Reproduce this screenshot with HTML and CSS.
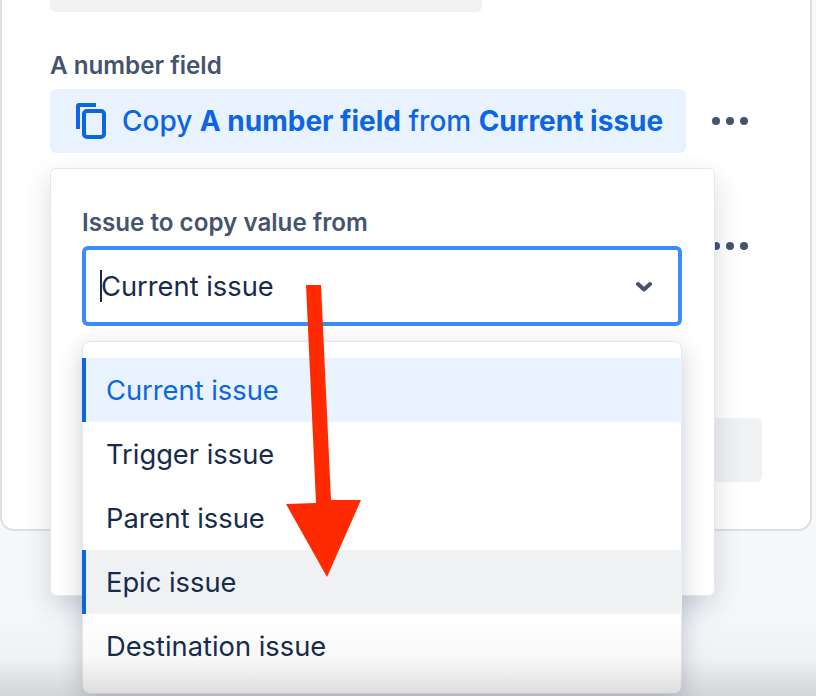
FILE: index.html
```html
<!DOCTYPE html>
<html lang="en">

<head>
    <meta charset="UTF-8">
    <title>Copy field value</title>
    <link rel="stylesheet" href="styles.css">
</head>

<body>
    <main class="card">
        <div class="card-top"></div>

        <div class="field-label">A number field</div>
        <div class="action-row">
            <div class="action">
                <svg class="copy-icon" width="32" height="36" viewBox="0 0 32 36" fill="none">
                    <path d="M2 26V3a1 1 0 0 1 1-1h17" stroke="#0c66e4" stroke-width="4" />
                    <rect x="8" y="8" width="20" height="26" rx="3" stroke="#0c66e4" stroke-width="4" />
                </svg>
                <span>Copy <b>A number field</b> from <b>Current issue</b></span>
            </div>
            <div class="dots"><i></i><i></i><i></i></div>
        </div>

        <div class="action-row second">
            <div class="action hidden"></div>
            <div class="dots"><i></i><i></i><i></i></div>
        </div>

        <div class="card-button"></div>
    </main>

    <section class="popover">
        <label class="select-label">Issue to copy value from</label>
        <div class="select">
            <span class="select-value">Current issue</span>
            <svg class="chevron" width="18" height="12" viewBox="0 0 18 12" fill="none">
                <path d="M3 4l6 5.500L15 4" stroke="#44546f" stroke-width="4" stroke-linecap="round" stroke-linejoin="round" />
            </svg>
        </div>

        <ul class="menu">
            <li class="selected">Current issue</li>
            <li>Trigger issue</li>
            <li>Parent issue</li>
            <li class="hovered">Epic issue</li>
            <li>Destination issue</li>
        </ul>
    </section>

    <div class="fade"></div>

    <svg class="arrow" width="816" height="696" viewBox="0 0 816 696">
        <polygon fill="#ff2a00" points="306,285 321,285 331,500 361,500 327,577 286,504 316,503" />
    </svg>
</body>

</html>
```

FILE: styles.css
```css
html,
body {
    margin: 0;
    padding: 0;
}

body {
    position: relative;
    width: 816px;
    height: 696px;
    overflow: hidden;
    background: #f6f7f9;
    font-family: Inter, "Noto Sans", sans-serif;
    color: #172b4d;
}

.card {
    box-sizing: border-box;
    width: 812px;
    height: 545px;
    margin-top: -14px;
    padding: 0 48px;
    background: #fff;
    border: 2px solid #dcdfe4;
    border-top: 0;
    border-radius: 0 0 14px 14px;
}

.card-top {
    width: 432px;
    height: 26px;
    background: #f0f1f3;
    border-radius: 0 0 6px 6px;
}

.field-label {
    margin-top: 40px;
    font-size: 24.200px;
    line-height: 28px;
    font-weight: 600;
    color: #44546f;
}

.action-row {
    display: flex;
    align-items: center;
    margin-top: 9px;
}

.action-row.second {
    margin-top: 61px;
}

.action {
    box-sizing: border-box;
    display: flex;
    align-items: center;
    gap: 14px;
    width: 636px;
    height: 64px;
    padding-left: 26px;
    background: #e9f2ff;
    border-radius: 6px;
    font-size: 28px;
    font-weight: 500;
    color: #0c66e4;
    white-space: nowrap;
}

.action.hidden {
    background: none;
}

.action b {
    font-weight: 700;
}

.dots {
    display: flex;
    gap: 6px;
    margin-left: 26px;
}

.dots i {
    display: block;
    width: 8px;
    height: 8px;
    background: #44546f;
    border-radius: 50%;
}

.card-button {
    width: 712px;
    height: 64px;
    margin-top: 140px;
    background: #f0f1f3;
    border-radius: 6px;
}

.popover {
    box-sizing: border-box;
    position: absolute;
    top: 168px;
    left: 50px;
    width: 665px;
    height: 428px;
    padding: 40px 31px 0;
    background: #fff;
    border: 1px solid #e6e7ea;
    border-radius: 6px;
    box-shadow: 0 12px 28px rgba(9, 30, 66, 0.16);
}

.select-label {
    display: block;
    font-size: 24.200px;
    line-height: 28px;
    font-weight: 600;
    color: #44546f;
}

.select {
    box-sizing: border-box;
    display: flex;
    align-items: center;
    justify-content: space-between;
    width: 600px;
    height: 80px;
    margin-top: 9px;
    padding: 0 25px 0 14px;
    border: 4px solid #3c8bfb;
    border-radius: 6px;
}

.select-value {
    height: 32px;
    border-left: 2px solid #172b4d;
    font-size: 27.300px;
    line-height: 34px;
    text-indent: -1px;
}

.menu {
    box-sizing: border-box;
    width: 600px;
    height: 353px;
    margin: 15px 0 0;
    padding: 16px 0 0;
    list-style: none;
    background: #fff;
    border: 1px solid #e6e7ea;
    border-radius: 8px;
    box-shadow: 0 8px 24px rgba(9, 30, 66, 0.22);
}

.menu li {
    box-sizing: border-box;
    height: 64px;
    margin-left: -1px;
    margin-right: -1px;
    padding-left: 24px;
    font-size: 27.300px;
    line-height: 66px;
}

.menu li.selected {
    background: #e9f2ff;
    border-left: 4px solid #0c66e4;
    padding-left: 20px;
    color: #0c66e4;
}

.menu li.hovered {
    background: #f0f1f3;
    border-left: 4px solid #0c66e4;
    padding-left: 20px;
}

.fade {
    position: absolute;
    left: 0;
    right: 0;
    bottom: 0;
    height: 82px;
    background: linear-gradient(to bottom, rgba(40, 40, 50, 0), rgba(40, 40, 50, 0.03) 55%, rgba(40, 40, 50, 0.17));
    pointer-events: none;
}

.arrow {
    position: absolute;
    top: 0;
    left: 0;
}
```
